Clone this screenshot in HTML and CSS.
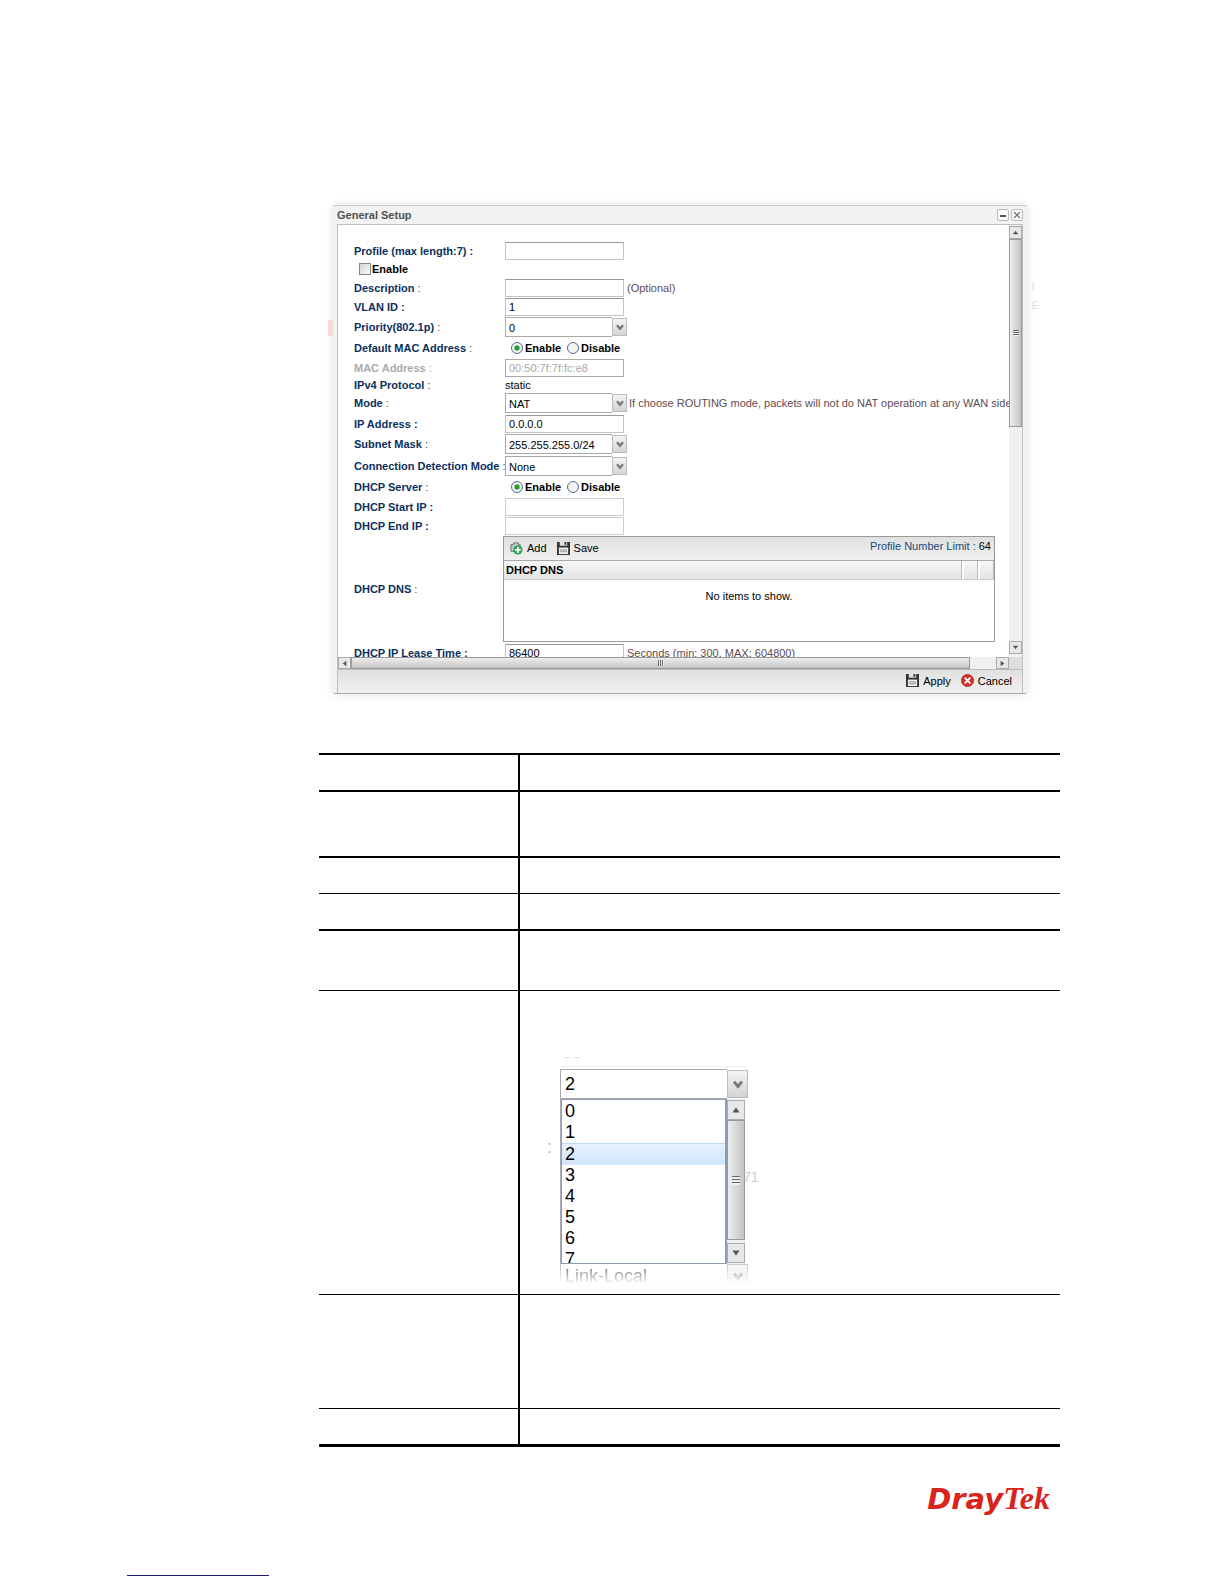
FILE: index.html
```html
<!DOCTYPE html>
<html lang="en">
<head>
    <meta charset="UTF-8">
    <meta name="viewport" content="width=device-width, initial-scale=1.0">
    <title>General Setup - DrayTek</title>
    <link rel="stylesheet" href="styles.css">
</head>
<body>
    <!-- Shared icons -->
    <svg class="sprite" aria-hidden="true">
        <symbol id="chevron" viewBox="0 0 10 10"><path d="M2.500 3.500l2.500 3 2.500-3" fill="none" stroke="#777" stroke-width="1.800"/></symbol>
        <symbol id="up" viewBox="0 0 10 10"><path d="M5 3l3 4H2z" fill="#555"/></symbol>
        <symbol id="down" viewBox="0 0 10 10"><path d="M2 3h6L5 7z" fill="#555"/></symbol>
        <symbol id="left" viewBox="0 0 10 10"><path d="M7 2v6L3 5z" fill="#555"/></symbol>
        <symbol id="right" viewBox="0 0 10 10"><path d="M3 2v6l4-3z" fill="#555"/></symbol>
        <symbol id="disk" viewBox="0 0 14 14">
            <path d="M0 0h14v14H0z" fill="#333"/>
            <path d="M3 0h8v4H3z" fill="#e4e4e4"/>
            <path d="M8 0h2v3H8z" fill="#333"/>
            <path d="M2 6h10v7H2z" fill="#f2f2f2"/>
            <path d="M3 8.500h8M3 10.500h8" stroke="#888"/>
        </symbol>
    </svg>

    <main>
        <section class="window">
            <header class="title-bar">
                <h1>General Setup</h1>
                <button class="win-button" aria-label="Minimize"><svg viewBox="0 0 10 10"><path d="M2 6h6" stroke="#555" stroke-width="2"/></svg></button>
                <button class="win-button" aria-label="Close"><svg viewBox="0 0 10 10"><path d="M2 2l6 6M8 2l-6 6" stroke="#777" stroke-width="1.3"/></svg></button>
            </header>

            <div class="window-body">
                <form class="viewport">
                    <div class="row">
                        <label for="profile">Profile (max length:7) :</label>
                        <input class="text" type="text" id="profile" maxlength="7">
                    </div>
                    <div class="row check-row">
                        <input type="checkbox" id="enable">
                        <label for="enable">Enable</label>
                    </div>
                    <div class="row">
                        <label for="description">Description<i> :</i></label>
                        <input class="text" type="text" id="description">
                        <span class="hint">(Optional)</span>
                    </div>
                    <div class="row">
                        <label for="vlan">VLAN ID :</label>
                        <input class="text" type="text" id="vlan" value="1">
                    </div>
                    <div class="row select-row">
                        <label for="priority">Priority(802.1p)<i> :</i></label>
                        <span class="combo"><select id="priority"><option>0</option></select><span class="arrow"><svg><use href="#chevron"/></svg></span></span>
                    </div>
                    <div class="row radio-row">
                        <span class="label">Default MAC Address<i> :</i></span>
                        <span class="choice"><input type="radio" name="mac" id="mac-on" checked><label for="mac-on">Enable</label></span>
                        <span class="choice"><input type="radio" name="mac" id="mac-off"><label for="mac-off">Disable</label></span>
                    </div>
                    <div class="row disabled">
                        <label for="mac">MAC Address<i> :</i></label>
                        <input class="text" type="text" id="mac" value="00:50:7f:7f:fc:e8" disabled>
                    </div>
                    <div class="row static-row">
                        <span class="label">IPv4 Protocol<i> :</i></span>
                        <span>static</span>
                    </div>
                    <div class="row select-row">
                        <label for="mode">Mode<i> :</i></label>
                        <span class="combo"><select id="mode"><option>NAT</option></select><span class="arrow"><svg><use href="#chevron"/></svg></span></span>
                        <span class="hint near">If choose ROUTING mode, packets will not do NAT operation at any WAN side</span>
                    </div>
                    <div class="row">
                        <label for="ip">IP Address :</label>
                        <input class="text" type="text" id="ip" value="0.0.0.0">
                    </div>
                    <div class="row select-row">
                        <label for="mask">Subnet Mask<i> :</i></label>
                        <span class="combo"><select id="mask"><option>255.255.255.0/24</option></select><span class="arrow"><svg><use href="#chevron"/></svg></span></span>
                    </div>
                    <div class="row select-row">
                        <label for="detection">Connection Detection Mode<i> :</i></label>
                        <span class="combo"><select id="detection"><option>None</option></select><span class="arrow"><svg><use href="#chevron"/></svg></span></span>
                    </div>
                    <div class="row radio-row">
                        <span class="label">DHCP Server<i> :</i></span>
                        <span class="choice"><input type="radio" name="dhcp" id="dhcp-on" checked><label for="dhcp-on">Enable</label></span>
                        <span class="choice"><input type="radio" name="dhcp" id="dhcp-off"><label for="dhcp-off">Disable</label></span>
                    </div>
                    <div class="row">
                        <label for="start-ip">DHCP Start IP :</label>
                        <input class="text light" type="text" id="start-ip">
                    </div>
                    <div class="row">
                        <label for="end-ip">DHCP End IP :</label>
                        <input class="text light" type="text" id="end-ip">
                    </div>
                    <div class="row grid-row">
                        <span class="label">DHCP DNS<i> :</i></span>
                        <div class="dns-grid">
                            <div class="grid-tools">
                                <button type="button" class="tool">
                                    <svg viewBox="0 0 14 14"><path d="M1 3h3V1h5v2h2v7H1z" fill="#ccc" stroke="#666"/><circle cx="8.500" cy="8.500" r="5" fill="#2fa35c"/><path d="M8.500 5.500v6M5.500 8.500h6" stroke="#fff" stroke-width="2"/></svg>
                                    Add
                                </button>
                                <button type="button" class="tool"><svg><use href="#disk"/></svg>Save</button>
                                <span class="limit">Profile Number Limit : <b>64</b></span>
                            </div>
                            <table class="grid-table">
                                <thead>
                                    <tr><th>DHCP DNS</th><th class="slim"></th><th class="slim"></th></tr>
                                </thead>
                                <tbody>
                                    <tr><td colspan="3">No items to show.</td></tr>
                                </tbody>
                            </table>
                        </div>
                    </div>
                    <div class="row">
                        <label for="lease">DHCP IP Lease Time :</label>
                        <input class="text" type="text" id="lease" value="86400">
                        <span class="hint">Seconds (min: 300, MAX: 604800)</span>
                    </div>
                </form>

                <div class="scroll-y">
                    <span class="scroll-button"><svg><use href="#up"/></svg></span>
                    <span class="thumb"><span class="grip"></span></span>
                    <span class="scroll-button end"><svg><use href="#down"/></svg></span>
                </div>
                <div class="scroll-x">
                    <span class="scroll-button"><svg><use href="#left"/></svg></span>
                    <span class="thumb"><span class="grip"></span></span>
                    <span class="scroll-button end"><svg><use href="#right"/></svg></span>
                </div>
                <div class="corner"></div>
            </div>

            <footer class="actions">
                <button class="tool"><svg><use href="#disk"/></svg>Apply</button>
                <button class="tool">
                    <svg viewBox="0 0 14 14"><circle cx="7" cy="7" r="6.500" fill="#d0312b" stroke="#a33"/><path d="M4 4l6 6M10 4l-6 6" stroke="#fff" stroke-width="2"/></svg>
                    Cancel
                </button>
            </footer>
            <div class="behind">I<br>E</div>
        </section>

        <table class="items">
            <tbody>
                <tr class="short thick"><td class="item"></td><td></td></tr>
                <tr class="tall thick"><td class="item"></td><td></td></tr>
                <tr class="short"><td class="item"></td><td></td></tr>
                <tr class="short thick"><td class="item"></td><td></td></tr>
                <tr class="medium"><td class="item"></td><td></td></tr>
                <tr class="figure">
                    <td class="item"></td>
                    <td>
                        <div class="priority-list">
                            <div class="ghost-top"></div>
                            <div class="big-combo">
                                <select aria-label="Priority"><option>2</option></select>
                                <span class="arrow"><svg><use href="#chevron"/></svg></span>
                            </div>
                            <div class="list-wrap">
                                <ul class="list" role="listbox" aria-label="Priority values">
                                    <li role="option">0</li>
                                    <li role="option">1</li>
                                    <li role="option" class="selected" aria-selected="true">2</li>
                                    <li role="option">3</li>
                                    <li role="option">4</li>
                                    <li role="option">5</li>
                                    <li role="option">6</li>
                                    <li role="option">7</li>
                                </ul>
                                <div class="scroll-y">
                                    <span class="scroll-button"><svg><use href="#up"/></svg></span>
                                    <span class="thumb"><span class="grip"></span></span>
                                    <span class="scroll-button end"><svg><use href="#down"/></svg></span>
                                </div>
                                <span class="ghost-colon">:</span>
                                <span class="ghost-number">71</span>
                            </div>
                            <div class="big-combo faded">
                                <span class="value">Link-Local</span>
                                <span class="arrow"><svg><use href="#chevron"/></svg></span>
                            </div>
                        </div>
                    </td>
                </tr>
                <tr class="large"><td class="item"></td><td></td></tr>
                <tr class="short last"><td class="item"></td><td></td></tr>
            </tbody>
        </table>

        <div class="logo"><span>Dray</span><em>Tek</em></div>
    </main>
    <div class="page-link"></div>
</body>
</html>
```

FILE: styles.css
```css
:root {
    --label-color: #0b2f5e;
    --hint-color: #5f4b50;
    --line-color: #a9a9a9;
    --bar-color: linear-gradient(#e0e0e0, #f0f0f0);
}

* {
    box-sizing: border-box;
}

body {
    margin: 0;
    background-color: #fff;
    color: #000;
    font-family: "Liberation Sans", Arial, sans-serif;
    font-size: 11px;
    line-height: 14px;
}

main {
    padding: 205px 164px 0 319px;
}

button,
input,
select {
    font: inherit;
    color: inherit;
    margin: 0;
}

.sprite {
    display: none;
}

/* Setup window */
.window {
    position: relative;
    margin: 0 33px 59px 14px;
    padding: 0 4px;
    background-color: #f2f2f2;
    border-top: 1px solid #ccc;
    border-bottom: 1px solid #aaa;
    border-radius: 3px;
    box-shadow: 0 0 9px rgba(0, 0, 0, 0.12);
}

/* Edge of the page behind the window */
.window::before {
    content: "";
    position: absolute;
    top: 114px;
    left: -5px;
    width: 5px;
    height: 16px;
    background-color: #f8dcdc;
}

.behind {
    position: absolute;
    top: 72px;
    right: -12px;
    color: #ddd;
    line-height: 18px;
}

.title-bar {
    display: flex;
    align-items: center;
    gap: 2px;
    height: 18px;
}

.title-bar h1 {
    flex: 1;
    margin: 0;
    font-size: 11px;
    color: #505050;
}

.win-button {
    width: 12px;
    height: 12px;
    padding: 0;
    display: flex;
    background-color: #fafafa;
    border: 1px solid #bbb;
    border-radius: 2px;
}

.win-button svg {
    width: 10px;
    height: 10px;
}

.window-body {
    display: grid;
    grid-template-columns: minmax(0, 1fr) 13px;
    grid-template-rows: 432px 12px;
    border: 1px solid #c0c0c0;
    border-bottom: 0;
    background-color: #fff;
}

.viewport {
    overflow: hidden;
    padding: 16px 0 0 16px;
}

.row {
    display: flex;
    height: 19px;
    align-items: center;
    white-space: nowrap;
}

.row > label,
.label {
    flex: 0 0 151px;
    min-width: 0;
    font-weight: bold;
    color: var(--label-color);
}

.row i {
    font-style: normal;
    font-weight: normal;
    color: #444;
}

.check-row {
    height: 18px;
    padding-left: 5px;
}

.check-row > label {
    color: #000;
}

.select-row {
    height: 22px;
}

.radio-row {
    height: 20px;
}

.static-row {
    height: 15px;
}

.grid-row {
    height: 108px;
}

.text {
    width: 119px;
    height: 18px;
    padding: 0 3px;
    background-color: #fff;
    border: 1px solid #c4c4c4;
    border-top-color: #999;
}

.text.light {
    border-color: #ccc;
}

.disabled .text {
    border-color: #aaa;
}

.row.disabled > label,
.disabled i,
.disabled .text {
    color: #aaa;
}

.hint {
    margin-left: 3px;
    color: var(--hint-color);
}

.hint.near {
    margin-left: 2px;
}

.combo {
    display: flex;
    flex: none;
    width: 122px;
    height: 20px;
}

.combo select {
    flex: 1;
    appearance: none;
    padding: 2px 3px 0;
    background-color: #fff;
    border: 1px solid var(--line-color);
    border-right: 0;
    border-radius: 0;
}

.arrow {
    display: flex;
    align-items: center;
    justify-content: center;
    width: 15px;
    height: 18px;
    margin-top: 1px;
    background: linear-gradient(#f4f4f4, #d4d4d4);
    border: 1px solid #bbb;
}

.arrow svg {
    width: 12px;
    height: 12px;
}

input[type="checkbox"] {
    appearance: none;
    width: 12px;
    height: 12px;
    margin-right: 1px;
    background: linear-gradient(135deg, #d4d4d4, #fafafa);
    border: 1px solid #888;
}

.choice {
    display: flex;
    align-items: center;
    gap: 2px;
    margin-left: 6px;
    font-weight: bold;
}

input[type="radio"] {
    appearance: none;
    width: 12px;
    height: 12px;
    border: 1px solid #4b6d92;
    border-radius: 50%;
    background-color: #f4f4f4;
}

input[type="radio"]:checked {
    background-image: radial-gradient(circle, #23a12b 30%, transparent 45%);
}

/* DNS grid */
.grid-row .label {
    flex-basis: 149px;
}

.dns-grid {
    width: 492px;
    height: 106px;
    margin-bottom: 1px;
    border: 1px solid #999;
}

.grid-tools {
    display: flex;
    align-items: center;
    gap: 10px;
    height: 24px;
    padding: 0 3px 0 6px;
    background: var(--bar-color);
    border-bottom: 1px solid #aaa;
}

.tool {
    display: flex;
    align-items: center;
    gap: 4px;
    padding: 0;
    background: none;
    border: 0;
}

.tool svg {
    width: 13px;
    height: 13px;
}

.limit {
    margin: 0 0 4px auto;
    color: #174a7c;
}

.limit b {
    font-weight: normal;
    color: #000;
}

.grid-table {
    width: 100%;
    border-collapse: separate;
    border-spacing: 0;
}

.grid-table th {
    height: 19px;
    padding: 0 2px;
    text-align: left;
    background: linear-gradient(#f8f8f8, #e2e2e2);
    border-right: 1px solid #bbb;
    border-bottom: 1px solid #ccc;
}

.grid-table .slim {
    width: 16px;
    border-left: 2px solid #fff;
}

.grid-table td {
    padding: 9px 0 0;
    text-align: center;
}

/* Scroll bars */
.scroll-y,
.scroll-x {
    display: flex;
    background-color: #f0f0f0;
}

.scroll-y {
    flex-direction: column;
    padding: 1px 0 3px;
}

.scroll-button {
    display: flex;
    flex: 0 0 13px;
    align-items: center;
    justify-content: center;
    background-color: #e8e8e8;
    border: 1px solid #aaa;
}

.scroll-button svg {
    width: 9px;
    height: 9px;
}

.scroll-button.end {
    margin-top: auto;
}

.thumb {
    display: flex;
    flex: 0 0 188px;
    align-items: center;
    justify-content: center;
    background: linear-gradient(90deg, #eee, #c4c4c4);
    border: 1px solid #999;
}

.scroll-x .thumb {
    flex-basis: 619px;
    background: linear-gradient(#eee, #c4c4c4);
}

.scroll-x .end {
    margin: 0 0 0 auto;
}

.grip {
    width: 6px;
    height: 6px;
    background: repeating-linear-gradient(#666 0 1px, #eee 1px 2px);
}

.scroll-x .grip {
    background: repeating-linear-gradient(90deg, #666 0 1px, #eee 1px 2px);
}

.corner {
    background-color: #ddd;
}

.actions {
    display: flex;
    justify-content: flex-end;
    gap: 10px;
    height: 24px;
    padding: 0 10px 2px;
    background: var(--bar-color);
    border: 1px solid #bbb;
    border-bottom: 0;
}

/* Item table */
.items {
    width: 100%;
    table-layout: fixed;
    border-collapse: separate;
    border-spacing: 0;
    border-top: 2px solid #000;
}

.items td {
    padding: 0;
    vertical-align: top;
    border-bottom: 1px solid #000;
}

.items .item {
    width: 201px;
    border-right: 2px solid #000;
}

.items .thick td {
    border-bottom-width: 2px;
}

.items .last td {
    border-bottom-width: 3px;
}

.short {
    height: 36px;
}

.short.thick {
    height: 37px;
}

.short.last {
    height: 38px;
}

.tall {
    height: 66px;
}

.medium {
    height: 60px;
}

.figure {
    height: 304px;
}

.large {
    height: 114px;
}

.priority-list {
    width: 188px;
    margin: 64px 0 0 40px;
    font-size: 18px;
    line-height: 21px;
}

.ghost-top {
    height: 12px;
    margin-bottom: 2px;
    background: linear-gradient(90deg, #ddd 6px, #fff 6px 10px, #ddd 10px 16px, #fff 16px) 4px 2px / 20px 1px no-repeat;
    border-bottom: 1px solid #f0f0f0;
}

.big-combo {
    display: flex;
    height: 30px;
}

.big-combo select,
.big-combo .value {
    flex: 1;
    appearance: none;
    padding: 0 4px;
    background-color: #fff;
    border: 1px solid #aaa;
    border-right: 0;
    border-radius: 0;
}

.big-combo .arrow {
    width: 21px;
    height: 28px;
}

.big-combo .arrow svg {
    width: 16px;
    height: 16px;
}

.list-wrap {
    position: relative;
    display: flex;
    height: 165px;
    padding-right: 3px;
    border-left: 1px solid #aab;
}

.list {
    flex: 1;
    margin: 0;
    padding: 1px 0 0;
    overflow: hidden;
    list-style: none;
    border: 1px solid #8d9db4;
    border-right-width: 2px;
}

.list li {
    height: 21px;
    padding-left: 3px;
}

.list .selected {
    height: 22px;
    background: linear-gradient(#e6f2ff, #d2e5fa);
    border-top: 1px solid #bfd8f0;
}

.list-wrap .scroll-y {
    width: 18px;
    padding-bottom: 1px;
}

.list-wrap .scroll-button {
    flex-basis: 20px;
}

.list-wrap .scroll-button svg {
    width: 12px;
    height: 12px;
}

.list-wrap .thumb {
    flex-basis: 120px;
}

.list-wrap .grip {
    width: 8px;
    height: 9px;
    background: repeating-linear-gradient(#666 0 1px, #eee 1px 3px);
}

.ghost-colon,
.ghost-number {
    position: absolute;
    top: 38px;
    left: -14px;
    color: #bbb;
}

.ghost-number {
    top: 68px;
    left: 182px;
    color: #ccc;
    font-size: 14px;
}

.big-combo.faded {
    height: 20px;
    overflow: hidden;
    color: #333;
    mask-image: linear-gradient(rgba(0, 0, 0, 0.8), transparent);
}

.faded .value {
    padding-top: 2px;
    border-top: 0;
}

.faded .arrow {
    height: 24px;
    margin-top: 0;
}

/* Page footer */
.logo {
    display: flex;
    align-items: baseline;
    justify-content: flex-end;
    margin-top: 29px;
    padding-right: 10px;
    color: #d9241c;
    line-height: 44px;
}

.logo span {
    font-family: "DejaVu Sans", sans-serif;
    font-size: 29px;
    font-style: italic;
    font-weight: bold;
}

.logo em {
    font-family: "Liberation Serif", serif;
    font-size: 32px;
    font-weight: bold;
}

.page-link {
    width: 142px;
    margin: 54px 0 8px 127px;
    border-bottom: 1px solid #1a1a80;
}
```
